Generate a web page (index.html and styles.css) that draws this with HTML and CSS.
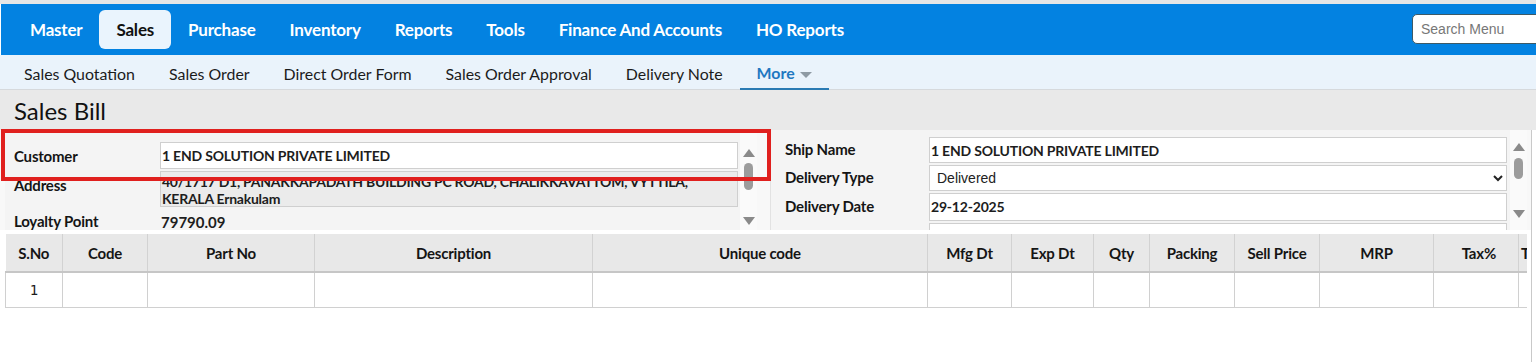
FILE: index.html
```html
<!DOCTYPE html>
<html lang="en">
<head>
    <meta charset="UTF-8">
    <title>Sales Bill</title>
    <link rel="stylesheet" href="styles.css">
</head>
<body>
    <div class="top-strip"></div>

    <header class="navbar">
        <ul class="main-menu">
            <li><a href="#">Master</a></li>
            <li class="active"><a href="#">Sales</a></li>
            <li><a href="#">Purchase</a></li>
            <li><a href="#">Inventory</a></li>
            <li><a href="#">Reports</a></li>
            <li><a href="#">Tools</a></li>
            <li><a href="#">Finance And Accounts</a></li>
            <li><a href="#">HO Reports</a></li>
        </ul>
        <input class="search-menu" type="text" placeholder="Search Menu">
    </header>

    <nav class="subnav">
        <a href="#">Sales Quotation</a>
        <a href="#">Sales Order</a>
        <a href="#">Direct Order Form</a>
        <a href="#">Sales Order Approval</a>
        <a href="#">Delivery Note</a>
        <a href="#" class="more">More <span class="caret"></span></a>
    </nav>

    <div class="page-title">
        <h1>Sales Bill</h1>
    </div>

    <div class="workspace">
        <section class="head-form">
            <div class="panel panel-left">
                <div class="fields">
                    <label class="row-customer">Customer</label>
                    <div class="field-input row-customer">1 END SOLUTION PRIVATE LIMITED</div>

                    <label class="row-address">Address</label>
                    <div class="field-address">
                        <div class="addr-scroll">
                            40/1717 D1, PANAKKAPADATH BUILDING PC ROAD, CHALIKKAVATTOM, VYTTILA,<br>
                            KERALA Ernakulam
                        </div>
                    </div>

                    <label class="row-loyalty">Loyalty Point</label>
                    <div class="field-value row-loyalty">79790.09</div>
                </div>
                <div class="fake-scroll left-scroll">
                    <span class="arrow up"></span>
                    <span class="thumb"></span>
                    <span class="arrow down"></span>
                </div>
            </div>

            <div class="panel panel-right">
                <div class="fields">
                    <label>Ship Name</label>
                    <div class="field-input">1 END SOLUTION PRIVATE LIMITED</div>

                    <label>Delivery Type</label>
                    <select class="field-select">
                        <option>Delivered</option>
                        <option>Pending</option>
                    </select>

                    <label>Delivery Date</label>
                    <div class="field-input">29-12-2025</div>

                    <label></label>
                    <div class="field-input cut"></div>
                </div>
                <div class="fake-scroll right-scroll">
                    <span class="arrow up"></span>
                    <span class="thumb"></span>
                    <span class="arrow down"></span>
                </div>
            </div>

            <!-- highlight box drawn over the customer row -->
            <div class="highlight"></div>
        </section>

        <div class="grid-wrap">
            <table class="item-grid">
                <colgroup>
                    <col style="width:57px">
                    <col style="width:85px">
                    <col style="width:167px">
                    <col style="width:278px">
                    <col style="width:335px">
                    <col style="width:84px">
                    <col style="width:82px">
                    <col style="width:56px">
                    <col style="width:85px">
                    <col style="width:85px">
                    <col style="width:114px">
                    <col style="width:85px">
                    <col style="width:70px">
                </colgroup>
                <thead>
                    <tr>
                        <th>S.No</th>
                        <th>Code</th>
                        <th>Part No</th>
                        <th>Description</th>
                        <th>Unique code</th>
                        <th>Mfg Dt</th>
                        <th>Exp Dt</th>
                        <th>Qty</th>
                        <th>Packing</th>
                        <th>Sell Price</th>
                        <th>MRP</th>
                        <th class="right">Tax%</th>
                        <th class="left">Total</th>
                    </tr>
                </thead>
                <tbody>
                    <tr>
                        <td class="sno">1</td>
                        <td></td>
                        <td></td>
                        <td></td>
                        <td></td>
                        <td></td>
                        <td></td>
                        <td></td>
                        <td></td>
                        <td></td>
                        <td></td>
                        <td></td>
                        <td></td>
                    </tr>
                </tbody>
            </table>
        </div>
    </div>
</body>
</html>
```

FILE: styles.css
```css
:root {
    --nav-blue: #0382e1;
    --nav-active: #eaf4fd;
    --subnav-bg: #eaf3fb;
    --link-blue: #1f78c1;
    --panel-bg: #f4f4f4;
    --title-bg: #e9e9e9;
    --border: #cfcfcf;
    --text: #1d1d1d;
    --highlight: #e0201e;
}

* {
    margin: 0;
    padding: 0;
    box-sizing: border-box;
}

body {
    font-family: 'Lato', 'Open Sans', sans-serif;
    color: var(--text);
    background: #ffffff;
    width: 1536px;
    height: 362px;
    overflow: hidden;
}

.top-strip {
    height: 4px;
    background: #e6e6e6;
}

/* main menu */
.navbar {
    height: 51px;
    margin-left: 1px;
    background: var(--nav-blue);
    display: flex;
    align-items: center;
    justify-content: space-between;
}

.main-menu {
    list-style: none;
    display: flex;
    align-items: center;
    padding-left: 12px;
}

.main-menu li a {
    display: block;
    padding: 0 17px;
    height: 39px;
    line-height: 40px;
    color: #ffffff;
    font-weight: 700;
    font-size: 17px;
    letter-spacing: -0.2px;
    text-decoration: none;
    border-radius: 6px;
}

.main-menu li.active a {
    background: var(--nav-active);
    color: #111111;
}

.search-menu {
    width: 140px;
    height: 30px;
    margin-right: -16px;
    margin-top: -2px;
    border: 1px solid #3d5a66;
    border-radius: 5px;
    padding: 0 8px;
    font-family: 'Liberation Sans', Arial, sans-serif;
    font-size: 14px;
    color: #333;
}

.search-menu::placeholder {
    color: #777777;
}

/* sub menu */
.subnav {
    height: 35px;
    background: var(--subnav-bg);
    border-bottom: 1px solid #d6d9dc;
    display: flex;
    padding-left: 7px;
}

.subnav a {
    display: block;
    padding: 0 17px;
    line-height: 38px;
    font-size: 15.9px;
    color: #1b1b1b;
    text-decoration: none;
}

.subnav a.more {
    color: var(--link-blue);
    font-weight: 700;
    border-bottom: 2px solid #2b7bb3;
    line-height: 36px;
    height: 35px;
}

.caret {
    display: inline-block;
    width: 0;
    height: 0;
    border-left: 6px solid transparent;
    border-right: 6px solid transparent;
    border-top: 6px solid #8e9aa3;
    vertical-align: middle;
    margin-left: 1px;
}

/* title */
.page-title {
    height: 40px;
    background: var(--title-bg);
    padding-left: 14px;
}

.page-title h1 {
    font-size: 24px;
    font-weight: 400;
    line-height: 41px;
    color: #111;
}

/* header form */
.workspace {
    width: 1532px;
    border-right: 1px solid #c9c9c9;
    height: 232px;
}

.head-form {
    position: relative;
    display: flex;
    height: 100px;
    padding-left: 5px;
    background: #f8f8f8;
}

.panel {
    display: flex;
    background: var(--panel-bg);
    height: 100px;
    overflow: hidden;
}

.panel-left {
    width: 752px;
}

.panel-right {
    width: 757px;
    margin-left: 13px;
    border-left: 1px solid #e2e2e2;
}

.fields {
    flex: 1;
    display: grid;
    align-content: start;
    row-gap: 2px;
}

.panel-left .fields {
    grid-template-columns: 146px 578px;
    padding: 12px 0 0 9px;
}

.panel-right .fields {
    grid-template-columns: 144px 578px;
    padding: 7px 0 0 14px;
    row-gap: 2px;
}

.fields label {
    font-weight: 700;
    font-size: 15px;
    letter-spacing: -0.2px;
    color: #151515;
    display: flex;
    align-items: center;
}

.panel-right .fields label {
    padding-bottom: 2px;
}

.field-input {
    height: 27px;
    background: #ffffff;
    border: 1px solid var(--border);
    font-weight: 700;
    font-size: 14px;
    letter-spacing: -0.2px;
    padding: 0 1px;
    line-height: 26px;
    white-space: nowrap;
}

.panel-right .field-input {
    height: 26px;
    line-height: 25px;
}

.panel-right .fields > :nth-child(5),
.panel-right .fields > :nth-child(6) {
    height: 28px;
}

.field-input.cut {
    height: 20px;
}

.field-select {
    height: 26px;
    border: 1px solid var(--border);
    background: #ffffff;
    font-family: 'Liberation Sans', Arial, sans-serif;
    font-size: 14px;
    padding-left: 3px;
    color: #222;
}

label.row-address {
    align-items: flex-start;
    padding-top: 5px;
}

.field-address {
    height: 36px;
    background: #ebebeb;
    border: 1px solid var(--border);
    overflow: hidden;
    font-weight: 700;
    font-size: 14px;
    letter-spacing: -0.25px;
}

.addr-scroll {
    line-height: 17px;
    padding: 0 1px;
    margin-top: 1px;
}

label.row-loyalty {
    height: 24px;
}

.field-value {
    font-weight: 700;
    font-size: 15px;
    padding-left: 1px;
    line-height: 27px;
}

/* fake scrollbars */
.fake-scroll {
    width: 17px;
    margin-left: 2px;
    background: #fafafa;
    position: relative;
}

.fake-scroll .arrow {
    position: absolute;
    left: 3px;
    width: 0;
    height: 0;
    border-left: 6px solid transparent;
    border-right: 6px solid transparent;
}

.fake-scroll .arrow.up {
    border-bottom: 8px solid #8a8a8a;
}

.fake-scroll .arrow.down {
    border-top: 8px solid #8a8a8a;
}

.fake-scroll .thumb {
    position: absolute;
    left: 4px;
    width: 9px;
    background: #9c9c9c;
    border-radius: 5px;
}

.left-scroll .arrow.up { top: 19px; }
.left-scroll .thumb { top: 33px; height: 27px; }
.left-scroll .arrow.down { top: 87px; }

.right-scroll {
    margin-left: 3px;
}

.right-scroll .arrow.up { top: 13px; }
.right-scroll .thumb { top: 28px; height: 21px; }
.right-scroll .arrow.down { top: 80px; }

.highlight {
    position: absolute;
    left: 1px;
    top: -1px;
    width: 770px;
    height: 52px;
    border: 4px solid var(--highlight);
    pointer-events: none;
}

/* item grid */
.grid-wrap {
    margin: 4px 0 0 5px;
    width: 1522px;
    overflow: hidden;
}

.item-grid {
    table-layout: fixed;
    border-collapse: collapse;
    width: 1573px;
}

.item-grid th {
    height: 38px;
    background: #e8e8e8;
    border-right: 1px solid #d2d2d2;
    border-bottom: 2px solid #c6c6c6;
    font-size: 15px;
    font-weight: 700;
    letter-spacing: -0.2px;
    color: #151515;
    text-align: center;
    white-space: nowrap;
    overflow: hidden;
}

.item-grid th.right {
    text-align: right;
    padding-right: 22px;
}

.item-grid th.left {
    text-align: left;
    padding-left: 2px;
}

.item-grid td {
    height: 35px;
    border: 1px solid #d0d0d0;
    border-top: none;
    background: #ffffff;
}

.item-grid td.sno {
    text-align: center;
    font-family: 'DejaVu Sans Mono', monospace;
    font-size: 14px;
}
```
